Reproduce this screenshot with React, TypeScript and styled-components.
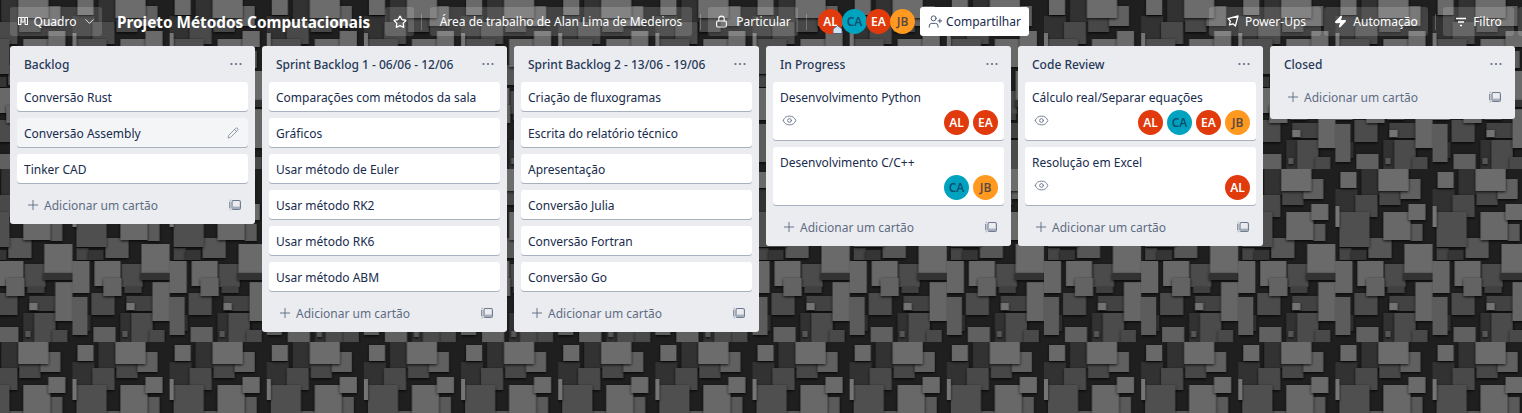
import React from "react";
import styled, { createGlobalStyle } from "styled-components";
import { ChevronDown, Star, Lock, UserPlus, Zap, Eye, Pencil, Plus } from "lucide-react";

const Global = createGlobalStyle`
  html, body { margin: 0; padding: 0; background: #2a2a2a; }
  * { box-sizing: border-box; }
`;

const Page = styled.div`
  position: relative;
  width: 1522px;
  height: 413px;
  overflow: hidden;
  font-family: "Noto Sans", "Open Sans", sans-serif;
  font-size: 12px;
  color: #172b4d;
`;

const Backdrop = styled.svg`
  position: absolute;
  inset: 0;
  width: 1522px;
  height: 413px;
`;

const Content = styled.div`
  position: relative;
  display: flex;
  flex-direction: column;
`;

const Header = styled.header`
  display: flex;
  align-items: center;
  height: 46px;
  padding: 0 0 3px 10px;
  width: 1540px;
`;

const NavButton = styled.div<{ $w: number; $ml?: number; $gap?: number; $pl?: number }>`
  display: flex;
  align-items: center;
  justify-content: center;
  gap: ${(p) => p.$gap ?? 6}px;
  height: 29px;
  width: ${(p) => p.$w}px;
  margin-left: ${(p) => p.$ml ?? 0}px;
  padding-left: ${(p) => p.$pl ?? 0}px;
  flex: none;
  border-radius: 3px;
  background: rgba(255, 255, 255, 0.16);
  color: #fff;
  font-size: 12px;
  white-space: nowrap;
`;

const Title = styled.h1`
  margin: 0 0 0 15px;
  width: 268px;
  flex: none;
  font-size: 15.3px;
  font-weight: 700;
  color: #fff;
  white-space: nowrap;
`;

const Divider = styled.span<{ $ml: number }>`
  flex: none;
  width: 1px;
  height: 16px;
  margin-left: ${(p) => p.$ml}px;
  background: rgba(255, 255, 255, 0.24);
`;

const Members = styled.div`
  display: flex;
  margin-left: 11px;
  flex: none;
`;

const Avatar = styled.span<{ $bg: string; $dark?: boolean; $overlap?: boolean }>`
  position: relative;
  display: flex;
  align-items: center;
  justify-content: center;
  flex: none;
  width: 25px;
  height: 25px;
  border-radius: 50%;
  background: ${(p) => p.$bg};
  color: ${(p) => (p.$dark ? "rgba(23,43,77,.72)" : "#fff")};
  font-size: 12px;
  font-weight: 600;
  margin-left: ${(p) => (p.$overlap ? "-1px" : "0")};
`;

const AdminBadge = styled.svg`
  position: absolute;
  right: 1px;
  bottom: 0;
  width: 9px;
  height: 9px;
`;

const ShareButton = styled.div`
  display: flex;
  align-items: center;
  justify-content: center;
  gap: 3px;
  flex: none;
  width: 109px;
  height: 29px;
  margin-left: 5px;
  border-radius: 3px;
  background: #fff;
  color: #172b4d;
  font-size: 12px;
`;

const Spacer = styled.div`
  width: 180px;
  flex: none;
`;

const Board = styled.main`
  display: flex;
  align-items: flex-start;
  gap: 7px;
  padding-left: 10px;
`;

const List = styled.section`
  width: 245px;
  flex: none;
  padding: 0 7px;
  background: #ebecf0;
  border-radius: 3px;
`;

const ListHead = styled.div`
  display: flex;
  align-items: center;
  justify-content: space-between;
  height: 36px;
  padding: 0 6px 0 7px;
`;

const ListName = styled.span`
  font-size: 12px;
  font-weight: 500;
  color: #253858;
`;

const Dots = styled.svg`
  width: 12px;
  height: 4px;
`;

const Cards = styled.div`
  display: flex;
  flex-direction: column;
  gap: 7px;
`;

const Card = styled.article<{ $hover?: boolean }>`
  display: flex;
  flex-direction: column;
  border-radius: 3px;
  padding: 0 7px;
  min-height: 29px;
  background: ${(p) => (p.$hover ? "#f4f5f7" : "#fff")};
  box-shadow: 0 1px 0 #a9b1c1;
  font-size: 12px;
  color: #172b4d;
`;

const CardTitle = styled.div`
  display: flex;
  align-items: center;
  justify-content: space-between;
  height: 29px;
  padding-top: 1px;
  flex: none;
`;

const PencilMark = styled.span`
  display: flex;
  color: #6b778c;
  margin-right: 2px;
`;

const Meta = styled.div`
  display: flex;
  align-items: flex-start;
  justify-content: space-between;
  height: 30px;
  margin: -1px -1px 0 0;
`;

const EyeMark = styled.span`
  display: flex;
  color: #6b778c;
  margin: 3px 0 0 2px;
`;

const AvatarRow = styled.div`
  display: flex;
  gap: 4px;
  margin-left: auto;
`;

const AddRow = styled.div<{ $empty?: boolean }>`
  display: flex;
  align-items: center;
  gap: 3px;
  height: 38px;
  margin: ${(p) => (p.$empty ? "-4px 0 3px" : "3px 0 0")};
  padding: 0 7px 0 8px;
  color: #5e6c84;
  font-size: 12px;
  span { flex: 1; }
`;

const rects: [number, number, number, number, string][] = [
  [26, 0, 20, 26, "#323232"],
  [0, 20, 22, 24, "#323232"],
  [33, 69, 23, 20, "#565656"],
  [4, 79, 12, 12, "#444444"],
  [16, 81, 15, 10, "#363636"],
  [49, 95, 21, 23, "#4c4c4c"],
  [52, 118, 17, 6, "#404040"],
  [19, 124, 23, 22, "#4c4c4c"],
  [54, 127, 26, 15, "#424242"],
  [48, 144, 32, 29, "#323232"],
  [59, 144, 21, 29, "#4c4c4c"],
  [77, 161, 15, 12, "#484848"],
  [6, 146, 12, 16, "#323232"],
  [50, 162, 5, 6, "#565656"],
  [54, 134, 8, 7, "#737373"],
  [21, 158, 22, 15, "#616161"],
  [0, 128, 15, 38, "#5c5c5c"],
  [80, 113, 17, 39, "#666666"],
  [0, 92, 17, 32, "#666666"],
  [22, 92, 26, 25, "#686868"],
  [31, 109, 18, 18, "#646464"],
  [69, 75, 28, 29, "#6a6a6a"],
  [68, 104, 29, 7, "#303030"],
  [20, 26, 22, 22, "#4a4a4a"],
  [44, 22, 21, 14, "#464646"],
  [65, 10, 20, 20, "#606060"],
  [43, 0, 30, 22, "#6c6c6c"],
  [5, 3, 16, 16, "#696969"],
  [4, 43, 30, 35, "#505050"],
  [75, 55, 12, 17, "#5a5a5a"],
  [48, 43, 27, 28, "#686868"],
  [73, 35, 17, 16, "#6a6a6a"],
  [0, 37, 4, 21, "#747474"],
];

const BackdropArt = () => (
  <Backdrop viewBox="0 0 1522 413" aria-hidden="true">
    <defs>
      <filter id="lift" x="-30%" y="-30%" width="170%" height="170%">
        <feDropShadow dx="0" dy="1" stdDeviation="1.8" floodColor="#000" floodOpacity="0.85" />
      </filter>
      <pattern id="tile" x="72.5" y="-4" width="97.15" height="173" patternUnits="userSpaceOnUse">
        <rect width="98" height="173" fill="#1f1f1f" />
        {rects.map(([x, y, w, h, c], i) => (
          <g key={i} filter="url(#lift)" fill={c}>
            <rect x={x} y={y} width={w} height={h} />
          </g>
        ))}
      </pattern>
    </defs>
    <rect width="1522" height="413" fill="url(#tile)" />
  </Backdrop>
);

const BoardIcon = () => (
  <svg width="10" height="9" viewBox="0 0 10 9" fill="none" stroke="#fff" strokeWidth="1">
    <rect x="0.5" y="0.5" width="2.4" height="7" />
    <rect x="3.8" y="0.5" width="2.4" height="4.5" />
    <rect x="7.1" y="0.5" width="2.4" height="7" />
  </svg>
);

const RocketIcon = () => (
  <svg width="13" height="13" viewBox="0 0 13 13" fill="none" stroke="#fff" strokeWidth="1.3" strokeLinejoin="round">
    <path d="M12 1 2 3.6l2.4 2.6-1 3.6 3.6-1L9.4 11z" />
  </svg>
);

const FilterIcon = () => (
  <svg width="12" height="10" viewBox="0 0 12 10" fill="none" stroke="#fff" strokeWidth="1.3">
    <path d="M1 1.5h10M3 5h6M5 8.5h2" />
  </svg>
);

const TemplateIcon = () => (
  <svg width="12" height="12" viewBox="0 0 12 12" fill="none" stroke="#6b778c" strokeWidth="1.1">
    <path d="M.8 2.8v6.4M.8 1.2h.8M.8 10.8h.8" />
    <rect x="3" y="1.5" width="8.4" height="9" rx="1.4" />
    <rect x="3.4" y="7.6" width="7.6" height="2.5" fill="#a5adba" stroke="none" />
  </svg>
);

type Who = "AL" | "CA" | "EA" | "JB";
const people: Record<Who, { bg: string; dark?: boolean }> = {
  AL: { bg: "#e13a0c" },
  CA: { bg: "#00a3bf", dark: true },
  EA: { bg: "#e13a0c" },
  JB: { bg: "#ff991f", dark: true },
};

type CardData = { title: string; hover?: boolean; eye?: boolean; who?: Who[] };
type ListData = { title: string; cards: CardData[] };

const lists: ListData[] = [
  {
    title: "Backlog",
    cards: [{ title: "Conversão Rust" }, { title: "Conversão Assembly", hover: true }, { title: "Tinker CAD" }],
  },
  {
    title: "Sprint Backlog 1 - 06/06 - 12/06",
    cards: [
      { title: "Comparações com métodos da sala" },
      { title: "Gráficos" },
      { title: "Usar método de Euler" },
      { title: "Usar método RK2" },
      { title: "Usar método RK6" },
      { title: "Usar método ABM" },
    ],
  },
  {
    title: "Sprint Backlog 2 - 13/06 - 19/06",
    cards: [
      { title: "Criação de fluxogramas" },
      { title: "Escrita do relatório técnico" },
      { title: "Apresentação" },
      { title: "Conversão Julia" },
      { title: "Conversão Fortran" },
      { title: "Conversão Go" },
    ],
  },
  {
    title: "In Progress",
    cards: [
      { title: "Desenvolvimento Python", eye: true, who: ["AL", "EA"] },
      { title: "Desenvolvimento C/C++", who: ["CA", "JB"] },
    ],
  },
  {
    title: "Code Review",
    cards: [
      { title: "Cálculo real/Separar equações", eye: true, who: ["AL", "CA", "EA", "JB"] },
      { title: "Resolução em Excel", eye: true, who: ["AL"] },
    ],
  },
  { title: "Closed", cards: [] },
];

export default function App() {
  return (
    <Page>
      <Global />
      <BackdropArt />
      <Content>
        <Header>
          <NavButton $w={92} $pl={3}>
            <BoardIcon />
            Quadro
            <ChevronDown size={15} strokeWidth={1.4} />
          </NavButton>
          <Title>Projeto Métodos Computacionais</Title>
          <NavButton $w={29}>
            <Star size={14} strokeWidth={2.2} />
          </NavButton>
          <Divider $ml={7} />
          <NavButton $w={262} $ml={8}>Área de trabalho de Alan Lima de Medeiros</NavButton>
          <Divider $ml={8} />
          <NavButton $w={90} $ml={7} $gap={8}>
            <Lock size={13} strokeWidth={2} />
            Particular
          </NavButton>
          <Divider $ml={8} />
          <Members>
            {(["AL", "CA", "EA", "JB"] as Who[]).map((w, i) => (
              <Avatar key={w} $bg={people[w].bg} $dark={people[w].dark} $overlap={i > 0}>
                {w}
                {i === 0 && (
                  <AdminBadge viewBox="0 0 9 9">
                    <path d="M0 8.5V4l4.5-3.5L9 4v4.5z" fill="#cfe3f5" stroke="#42526e" strokeWidth="0.8" />
                  </AdminBadge>
                )}
              </Avatar>
            ))}
          </Members>
          <ShareButton>
            <UserPlus size={15} strokeWidth={1.5} color="#42526e" />
            Compartilhar
          </ShareButton>
          <Spacer />
          <NavButton $w={112} $pl={2}>
            <RocketIcon />
            <span>Power-Ups</span>
          </NavButton>
          <NavButton $w={104} $ml={3}>
            <Zap size={13} fill="#fff" />
            <span>Automação</span>
          </NavButton>
          <Divider $ml={7} />
          <NavButton $w={71} $ml={7}>
            <FilterIcon />
            Filtro
          </NavButton>
          <NavButton $w={29} $ml={4} />
        </Header>
        <Board>
          {lists.map((list) => (
            <List key={list.title}>
              <ListHead>
                <ListName>{list.title}</ListName>
                <Dots viewBox="0 0 12 4" fill="#5e6c84">
                  <circle cx="1.5" cy="2" r="1.1" />
                  <circle cx="6" cy="2" r="1.1" />
                  <circle cx="10.5" cy="2" r="1.1" />
                </Dots>
              </ListHead>
              <Cards>
                {list.cards.map((card) => (
                  <Card key={card.title} $hover={card.hover}>
                    <CardTitle>
                      {card.title}
                      {card.hover && (
                        <PencilMark>
                          <Pencil size={12} strokeWidth={1.4} />
                        </PencilMark>
                      )}
                    </CardTitle>
                    {card.who && (
                      <Meta>
                        {card.eye && (
                          <EyeMark>
                            <Eye size={15} strokeWidth={1.5} />
                          </EyeMark>
                        )}
                        <AvatarRow>
                          {card.who.map((w) => (
                            <Avatar key={w} $bg={people[w].bg} $dark={people[w].dark}>
                              {w}
                            </Avatar>
                          ))}
                        </AvatarRow>
                      </Meta>
                    )}
                  </Card>
                ))}
              </Cards>
              <AddRow $empty={list.cards.length === 0}>
                <Plus size={16} strokeWidth={1.4} />
                <span>Adicionar um cartão</span>
                <TemplateIcon />
              </AddRow>
            </List>
          ))}
        </Board>
      </Content>
    </Page>
  );
}
